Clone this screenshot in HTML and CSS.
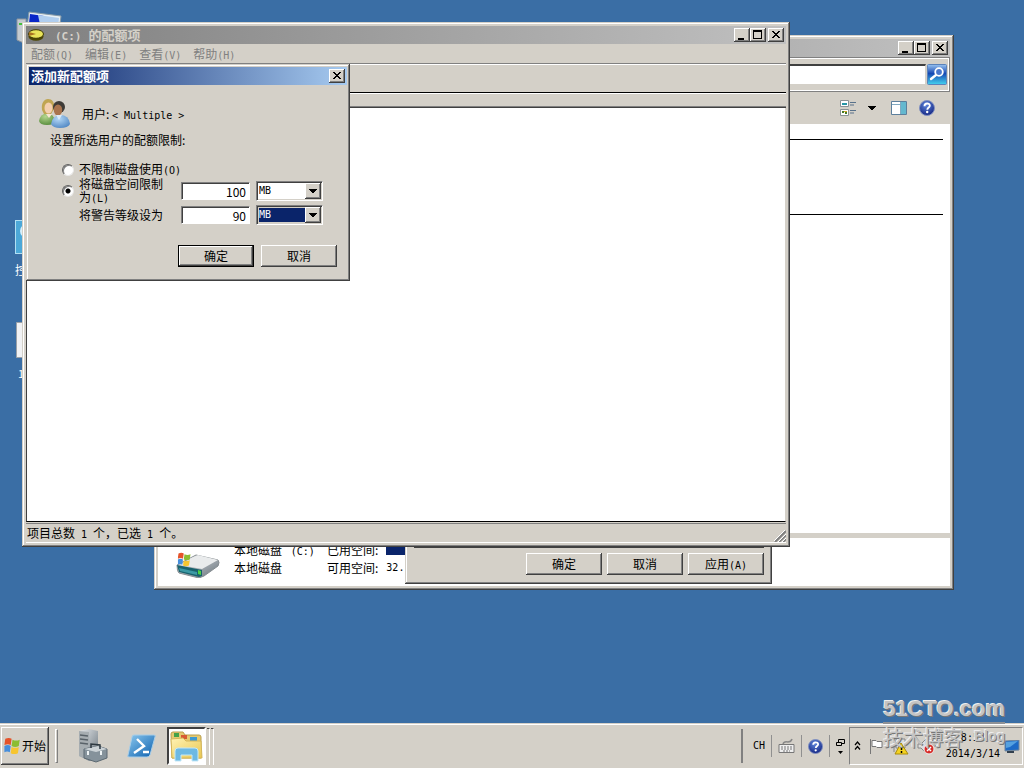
FILE: index.html
```html
<!DOCTYPE html>
<html lang="zh-CN">
<head>
<meta charset="utf-8">
<title>(C:) 的配额项</title>
<link rel="stylesheet" href="styles.css">
</head>
<body>
<svg width="0" height="0" class="defs" aria-hidden="true">
  <defs>
    <linearGradient id="blue" x1="0" y1="0" x2="1" y2="1"><stop offset="0" stop-color="#8cc8ee"/><stop offset="1" stop-color="#0b5fae"/></linearGradient>
    <linearGradient id="cyan" x1="0" y1="0" x2="0" y2="1"><stop offset="0" stop-color="#9ac4f0"/><stop offset=".45" stop-color="#1649b4"/><stop offset="1" stop-color="#45d4ef"/></linearGradient>
    <linearGradient id="steel" x1="0" y1="0" x2="1" y2="1"><stop offset="0" stop-color="#e8ebed"/><stop offset="1" stop-color="#66717a"/></linearGradient>
    <linearGradient id="folder" x1="0" y1="0" x2="1" y2="1"><stop offset="0" stop-color="#fff3b4"/><stop offset="1" stop-color="#e9c64f"/></linearGradient>
    <radialGradient id="navy" cx=".45" cy=".3" r=".75"><stop offset="0" stop-color="#5f87dc"/><stop offset="1" stop-color="#10207e"/></radialGradient>
    <radialGradient id="green" cx=".4" cy=".3" r=".8"><stop offset="0" stop-color="#b5d68e"/><stop offset="1" stop-color="#4f8636"/></radialGradient>
    <radialGradient id="shirt" cx=".4" cy=".3" r=".8"><stop offset="0" stop-color="#b4d8f6"/><stop offset="1" stop-color="#4a82c0"/></radialGradient>
    <symbol id="min" viewBox="0 0 12 10"><path d="M2 8h6v2H2z"/></symbol>
    <symbol id="max" viewBox="0 0 12 10"><path d="M1 0h9v9H1zM2 2v6h7V2z" fill-rule="evenodd"/></symbol>
    <symbol id="close" viewBox="0 0 12 10"><path d="M2 1h2v1h1v1h2V2h1V1h2v1H9v1H8v1H7v1h1v1h1v1h1v1H8V7H7V6H5v1H4v1H2V7h1V6h1V5h1V4H4V3H3V2H2z"/></symbol>
    <symbol id="down" viewBox="0 0 8 4"><path d="M0 0h8v1H7v1H6v1H5v1H3V3H2V2H1V1H0z"/></symbol>
    <symbol id="help" viewBox="0 0 16 16"><circle cx="8" cy="8" r="7.5" fill="url(#navy)" stroke="#8090c0"/><path d="M5.5 6.2c0-3.6 5.3-3.3 5.3-.5 0 1.8-2.5 1.9-2.5 4" fill="none" stroke="#fff" stroke-width="1.9"/><circle cx="8.2" cy="12" r="1.2" fill="#fff"/></symbol>
    <symbol id="flag" viewBox="0 0 18 20"><path d="M1 2Q5 0 8 2L7 9Q4 7 0 9z" fill="#e5532a"/><path d="M9 3q4 2 8 0l-1 7q-4 2-8 0z" fill="#8bbd32"/><path d="M0 10q4-2 7 0l-1 7q-3-2-6 0z" fill="#468edc"/><path d="M8 11q4 2 8 0l-1 7q-4 2-8 0z" fill="#f7c52f"/></symbol>
  </defs>
</svg>

<main class="desktop">
  <div class="shortcut computer">
    <svg width="48" height="36" viewBox="0 0 48 36"><path d="M1 8h9v25l-9-4z" fill="#c5cbd0" stroke="#8d959c"/><path d="M3 12h4v2H3z" fill="#43c13b"/><path d="M13 1l32 4-3 24-32-4z" fill="#e8f0f5" stroke="#889ba8"/><path d="M14 3l14 2-3 18-13-2z" fill="#0826c8"/><path d="M22 4l21 3-2 18-15-2z" fill="#b0ceef"/></svg>
  </div>
  <div class="shortcut control">
    <svg width="36" height="34" viewBox="0 0 36 34"><rect x=".5" y=".5" width="35" height="33" fill="#4ca8d8" stroke="#b1e0f4"/><circle cx="12" cy="11" r="7" fill="#d9f0fa"/></svg>
    <span>控制面板</span>
  </div>
  <div class="shortcut file">
    <svg width="32" height="36" viewBox="0 0 32 36"><path d="M.5.5h31v35H.5z" fill="#f1f2f4" stroke="#9aa0a7"/></svg>
    <span>1</span>
  </div>

  <section class="window explorer" aria-label="计算机">
    <header class="caption idle">
      <div class="controls">
        <button aria-label="最小化"><svg width="12" height="10"><use href="#min"/></svg></button><button aria-label="最大化"><svg width="12" height="10"><use href="#max"/></svg></button><button class="shut" aria-label="关闭"><svg width="12" height="10"><use href="#close"/></svg></button>
      </div>
    </header>
    <form class="address">
      <input type="search" aria-label="搜索">
      <button type="button" class="find" aria-label="搜索"><svg width="20" height="21" viewBox="0 0 20 21"><rect x=".5" y=".5" width="19" height="20" rx="1" fill="url(#cyan)" stroke="#5b83bb"/><path d="M9 11l-5 4" stroke="#fff" stroke-width="2.4" stroke-linecap="round"/><circle cx="12" cy="8" r="3.8" fill="#4a78cc" stroke="#fff" stroke-width="1.8"/></svg></button>
    </form>
    <nav class="tools">
      <button aria-label="视图"><svg width="17" height="16" viewBox="0 0 17 16"><path d="M.5.5h8v6h-8zM.5 9.500h8v6h-8z" fill="#fff" stroke="#8a9294"/><path d="M2 3h5v2H2z" fill="#2696a5"/><path d="M2 11h2v2H2zM5 12h2v2H5z" fill="#477b24"/><path d="M4 11h3v1H4z" fill="#d4a52a"/><path d="M10 2.500h6M10 5h4M10 10.500h6M10 13h4" stroke="#58718b"/></svg></button>
      <button class="drop" aria-label="更多视图"><svg width="8" height="4"><use href="#down"/></svg></button>
      <button class="pane" aria-label="预览窗格"><svg width="16" height="14" viewBox="0 0 16 14"><path d="M.5.5h15v13H.5z" fill="#fff" stroke="#5c7f9c"/><path d="M10 1h5v12h-5z" fill="#64b8cf"/><path d="M1 3.500h9M9.500 1v12" stroke="#81a9c0"/></svg></button>
      <button aria-label="帮助"><svg width="16" height="16"><use href="#help"/></svg></button>
    </nav>
    <div class="files"><hr><hr></div>
    <footer class="details">
      <svg width="44" height="26" viewBox="0 0 44 26"><path d="M1 13L20 3l22 5q2 2 0 6L28 24l-5 2L3 21q-2-1-2-8z" fill="url(#steel)" stroke="#868d91"/><path d="M15 6l7-3 20 5-16 9-22-4z" fill="#e9ebec"/><path d="M1 13l25 5v6l-3 1L3 20z" fill="#19626d"/><path d="M3 16l18 4v3L4 19z" fill="#3c9aa5"/><path d="M22 18l3 1v4l-3-1z" fill="#4cd244"/><svg x="1" y="0" width="15" height="15" viewBox="0 0 18 20"><use href="#flag"/></svg></svg>
      <dl>
        <dt>本地磁盘 <span class="latin"> (C:)</span></dt><dd>已用空间: <i class="meter"></i></dd>
        <dt>本地磁盘</dt><dd>可用空间: <span class="latin">32.</span></dd>
      </dl>
    </footer>
  </section>

  <section class="window properties" aria-label="属性">
    <button class="push">确定</button><button class="push">取消</button><button class="push">应用<span class="latin">(A)</span></button>
  </section>

  <section class="window quota" aria-labelledby="quota-title">
    <header class="caption idle">
      <svg width="16" height="12" viewBox="0 0 16 12"><ellipse cx="8" cy="7.500" rx="7.500" ry="4.300" fill="#4d4705"/><ellipse cx="8" cy="5" rx="7.500" ry="4.300" fill="#e9e45a" stroke="#3e3902"/><path d="M8 5L1 3v4z" fill="#a97322"/></svg>
      <h1 id="quota-title"><span class="latin">(C:)</span> 的配额项</h1>
      <div class="controls">
        <button aria-label="最小化"><svg width="12" height="10"><use href="#min"/></svg></button><button aria-label="最大化"><svg width="12" height="10"><use href="#max"/></svg></button><button class="shut" aria-label="关闭"><svg width="12" height="10"><use href="#close"/></svg></button>
      </div>
    </header>
    <nav class="menu">
      <button>配额<span class="latin">(Q)</span></button><button>编辑<span class="latin">(E)</span></button><button>查看<span class="latin">(V)</span></button><button>帮助<span class="latin">(H)</span></button>
    </nav>
    <div class="toolbar"></div>
    <div class="columns"></div>
    <div class="list"></div>
    <footer class="status">
      <span>项目总数<span class="latin"> 1 </span>个，已选<span class="latin"> 1 </span>个。</span>
      <svg width="12" height="12" viewBox="0 0 12 12"><path d="M1 12L12 1M5 12l7-7M9 12l3-3" stroke="#808080" stroke-width="2"/><path d="M0 11L11 0M4 12l8-8M8 12l4-4" stroke="#fff"/></svg>
    </footer>
  </section>

  <section class="window dialog" role="dialog" aria-labelledby="dialog-title">
    <header class="caption active">
      <h2 id="dialog-title">添加新配额项</h2>
      <div class="controls"><button aria-label="关闭"><svg width="12" height="10"><use href="#close"/></svg></button></div>
    </header>
    <form class="limits">
      <div class="user">
        <svg width="32" height="30" viewBox="0 0 32 30"><path d="M0 22q1-7 8-8 7 1 8 8-1 4-8 4-7 0-8-4z" fill="url(#green)"/><path d="M3 11C2 4 5 0 9 0s7 3 6 10l-3 5H5z" fill="#c0a552"/><ellipse cx="9.500" cy="9" rx="4" ry="5.500" fill="#f3cfb0"/><path d="M7 15l3 4 3-4z" fill="#f8e5d2"/><path d="M12 25q1-8 9-9 9 0 10 9-2 4-10 4-7 0-9-4z" fill="url(#shirt)"/><ellipse cx="20" cy="8" rx="6" ry="6" fill="#3e3b37"/><ellipse cx="19" cy="11" rx="4.200" ry="5.500" fill="#a9744e"/><path d="M17 16l3 5 3-5z" fill="#dceaf7"/></svg>
        <span>用户: <span class="latin">&lt; Multiple &gt;</span></span>
      </div>
      <p>设置所选用户的配额限制:</p>
      <div class="choice"><input type="radio" name="limit" id="unlimited"><label for="unlimited">不限制磁盘使用<span class="latin">(O)</span></label></div>
      <div class="fields">
        <div class="choice"><input type="radio" name="limit" id="limited" checked><label for="limited">将磁盘空间限制为<span class="latin">(L)</span></label></div>
        <input class="amount" type="text" value="100" aria-label="磁盘空间限制">
        <span class="combo"><select aria-label="限制单位"><option>MB</option></select><i><svg width="8" height="4"><use href="#down"/></svg></i></span>
        <label class="warn" for="warning">将警告等级设为</label>
        <input class="amount" type="text" id="warning" value="90">
        <span class="combo chosen"><select aria-label="警告单位"><option>MB</option></select><i><svg width="8" height="4"><use href="#down"/></svg></i></span>
      </div>
      <div class="actions"><button type="button" class="push default">确定</button><button type="button" class="push">取消</button></div>
    </form>
  </section>
</main>

<footer class="taskbar">
  <button class="start"><svg width="17" height="18"><use href="#flag"/></svg>开始</button>
  <i class="grip"></i>
  <nav class="pins">
    <button aria-label="服务器管理器"><svg width="30" height="34" viewBox="0 0 30 34"><path d="M1 2l10-2 9 2v28l-9 2-10-5z" fill="url(#steel)"/><path d="M1 2l10 1v28L1 27z" fill="#a6adb1"/><path d="M2 6l8 1M2 10l8 1M2 14l8 1" stroke="#596269" stroke-width="1.500"/><path d="M6 20l14-3 9 3v9l-11 4-12-4z" fill="#85929b" stroke="#5c6972"/><path d="M6 20l12 3 11-3-9-3z" fill="#cbd2d6"/><path d="M13 19v-4l9 1v4" fill="none" stroke="#2d3941" stroke-width="1.500"/><path d="M10 22v4M23 22v4" stroke="#eef3f5" stroke-width="2"/></svg></button>
    <button aria-label="PowerShell"><svg width="29" height="24" viewBox="0 0 29 24"><path d="M7 1h20q2 0 1 2l-5 18q-1 2-3 2H2q-2 0-1-2L5 3q0-2 2-2z" fill="url(#blue)" stroke="#a9cee8"/><path d="M10 5l7 7-10 7M16 18h6" fill="none" stroke="#fff" stroke-width="2.400"/></svg></button>
    <button class="open" aria-label="Windows 资源管理器"><svg width="33" height="31" viewBox="0 0 33 31"><path d="M1 3q0-2 2-2h10l2 3h14q2 0 2 2v21H2z" fill="#e5ca71" stroke="#b99e4d"/><path d="M4 2h5v4H4z" fill="#43a24a"/><path d="M11 4h6v4h-6z" fill="#d75a34"/><path d="M20 6h7v4h-7z" fill="#3e9ad2"/><path d="M1 8l12-1 3 3h15l1 17H2z" fill="url(#folder)" stroke="#d4b65a"/><path d="M5 30V20q0-3 3-3h17q3 0 3 3v10h-6v-6H11v6z" fill="#6db9e3" stroke="#c5e8f7"/></svg></button>
    <i class="edge"></i><i class="edge"></i>
  </nav>
  <div class="language">
    <span class="latin">CH</span><i></i>
    <svg width="17" height="16" viewBox="0 0 17 16"><path d="M1 6.500h15v8H1z" fill="#eee" stroke="#777"/><path d="M3 9h11M3 11h11M5 13h7" stroke="#777" stroke-dasharray="2 1"/><path d="M5 6q1-3 5-2 3 0 4-3" fill="none" stroke="#888" stroke-width="1.500"/></svg><i></i>
    <svg width="15" height="15"><use href="#help"/></svg><i></i>
    <svg width="9" height="17" viewBox="0 0 9 17"><path d="M2.500 4V1.500h6v4H6M.5 4.500h5v3h-5z" fill="none" stroke="#000"/><path d="M2 13h5l-2.500 3z"/></svg>
  </div>
  <div class="tray">
    <svg width="7" height="10" viewBox="0 0 7 10"><path d="M1 4l2.500-3L6 4M1 8.500l2.500-3 2.500 3" fill="none" stroke="#000" stroke-width="1.200"/></svg>
    <svg width="15" height="17" viewBox="0 0 15 17"><path d="M1.500 1v15M3 2.500h4l1 1h5v6H8l-1-1H3z" fill="#fff" stroke="#777"/></svg>
    <svg width="17" height="18" viewBox="0 0 17 18"><path d="M2 1v14M4 2h9v9H4z" fill="#ddd" stroke="#888"/><path d="M9 6l7 11H3z" fill="#f5d321" stroke="#a88a0b"/><path d="M9.500 9v4M9.500 14v2" stroke="#000" stroke-width="1.500"/></svg>
    <svg width="18" height="18" viewBox="0 0 18 18"><path d="M1 7h3l5-5v14l-5-5H1z" fill="#ddd" stroke="#888"/><circle cx="12" cy="12" r="5" fill="#d72b27" stroke="#eee"/><path d="M10 10l4 4M14 10l-4 4" stroke="#fff" stroke-width="1.500"/></svg>
    <time class="clock latin" datetime="2014-03-14T08:54"><span>8:54</span><span>2014/3/14</span></time>
    <svg width="16" height="13" viewBox="0 0 16 13"><path d="M1 1l14-1v10l-14 1z" fill="#1d6ac6" stroke="#70869c"/><path d="M2 2l12-1-8 6-4 1z" fill="#55a1e0"/><path d="M3 11h7v2H3z" fill="#33414f"/></svg>
  </div>
</footer>
<div class="watermark"><b>51CTO.com</b><div><span>技术博客</span><em>Blog</em></div></div>
</body>
</html>
```
FILE: styles.css
```css
* { box-sizing: border-box; }
body {
  margin: 0;
  height: 100vh;
  display: flex;
  flex-direction: column;
  overflow: hidden;
  position: relative;
  background: #3a6ea5;
  color: #000;
  font: 12px/14px "Noto Sans CJK SC", sans-serif;
}
button, input, select { font: inherit; color: inherit; margin: 0; padding: 0; border: 0; border-radius: 0; background: none; }
h1, h2, p, dl, dd { margin: 0; font-size: 12px; }
svg { display: block; flex: none; }
.defs { position: absolute; }
.latin { font-family: "DejaVu Sans Mono", monospace; font-size: 10px; line-height: 12px; white-space: pre; }

.desktop { flex: 1; position: relative; min-height: 0; }
.shortcut { position: absolute; color: #fff; white-space: nowrap; }
.shortcut span { display: block; }
.computer { left: 16px; top: 11px; }
.control { left: 15px; top: 220px; }
.control span { margin-top: 9px; }
.file { left: 16px; top: 322px; }
.file span { margin: 8px 0 0 2px; font-size: 11px; }

.window {
  position: absolute;
  display: flex;
  flex-direction: column;
  padding: 4px;
  background: #d4d0c8;
  box-shadow: inset -1px -1px #404040, inset 1px 1px #d4d0c8, inset -2px -2px #808080, inset 2px 2px #fff;
}
.caption { display: flex; align-items: center; height: 18px; flex: none; padding: 0 2px; }
.caption h1, .caption h2 { font-size: 13px; font-weight: 700; white-space: nowrap; }
.idle { background: linear-gradient(90deg, #808080, #c0c0c0); color: #d4d0c8; }
.active { background: linear-gradient(90deg, #0a246a, #a6caf0); color: #fff; }
.caption h1 { margin-left: 11px; }
.caption h1 .latin { font-size: 11px; margin-right: 4px; }
.controls { margin-left: auto; display: flex; }
.controls button {
  width: 16px;
  height: 14px;
  display: grid;
  place-items: center;
  color: #000;
  background: #d4d0c8;
  box-shadow: inset -1px -1px #404040, inset 1px 1px #fff, inset -2px -2px #808080;
}
.controls .shut { margin-left: 2px; }

.push {
  width: 76px;
  height: 22px;
  flex: none;
  background: #d4d0c8;
  box-shadow: inset -1px -1px #404040, inset 1px 1px #fff, inset -2px -2px #808080;
}
.default { border: 1px solid #000; }

.explorer { left: 154px; top: 35px; width: 800px; height: 555px; }
.address {
  display: flex;
  align-items: center;
  height: 35px;
  padding: 0 2px 0 8px;
  border: 1px solid #808080;
  box-shadow: inset -1px -1px #fff, inset 0 1px #fff;
}
.address input { flex: 1; height: 21px; margin-right: 1px; background: #fff; border: 1px solid #d4d0c8; border-top: 2px solid #404040; }
.tools { display: flex; justify-content: flex-end; align-items: center; height: 32px; padding-right: 15px; }
.drop { margin: 0 15px 0 11px; }
.pane { margin-right: 12px; }
.files { flex: 1; background: #fff; padding: 15px 7px 0 0; }
.files hr { margin: 0 0 74px; border: 0; height: 1px; background: #000; }
.details { display: flex; align-items: flex-start; height: 53px; border-top: 5px solid #d4d0c8; background: #fff; padding: 5px 0 0 18px; }
.details svg { margin-top: 9px; }
.details dl { display: grid; grid-template-columns: 93px auto; grid-auto-rows: 14px; row-gap: 4px; margin-left: 14px; }
.details dd { display: flex; gap: 8px; align-items: center; }
.meter { width: 120px; height: 9px; background: #0a246a; }

.properties { left: 405px; top: 320px; width: 367px; height: 264px; flex-direction: row; align-items: flex-end; justify-content: flex-end; gap: 5px; padding: 0 8px 9px; }
.properties::before { content: ""; position: absolute; left: 9px; right: 8px; bottom: 36px; height: 1px; background: #404040; }

.quota { left: 22px; top: 22px; width: 768px; height: 525px; }
.menu { display: flex; gap: 12px; height: 21px; padding-left: 5px; align-items: center; color: #808080; border-bottom: 1px solid #fff; box-shadow: inset 0 -1px #808080; }
.toolbar { height: 28px; border-bottom: 1px solid #000; }
.columns { height: 15px; border-bottom: 1px solid #404040; box-shadow: inset 0 1px #fff, inset 0 -1px #808080; }
.list { flex: 1; background: #fff; border: solid #d4d0c8; border-width: 0 1px 0 0; border-left: 1px solid #404040; border-bottom: 1px solid #000; }
.status { display: flex; align-items: center; justify-content: space-between; height: 20px; margin-top: 1px; padding: 1px 0 0 1px; border-top: 1px solid #808080; border-bottom: 1px solid #fff; }
.status svg { align-self: flex-end; }

.dialog { left: 26px; top: 64px; width: 324px; height: 217px; padding: 3px; }
.limits { padding: 14px 10px 0; }
.user { display: flex; align-items: center; gap: 11px; }
.limits p { margin: 4px 0 15px 11px; }
.choice { display: flex; align-items: center; gap: 5px; margin-left: 23px; }
.choice label { line-height: 13px; }
.choice input { appearance: none; flex: none; width: 12px; height: 12px; border-radius: 50%; background: #fff; border: 1px solid; border-color: #606060 #e8e8e8 #e8e8e8 #606060; box-shadow: inset 1px 1px #808080; }
.choice input:checked { background: radial-gradient(circle, #000 0 2px, #fff 3px); }
.fields { display: grid; grid-template-columns: 136px 69px 67px; column-gap: 6px; align-items: center; }
.fields .choice { margin-right: 10px; }
.warn { margin-left: 40px; }
.amount { width: 100%; height: 18px; text-align: right; padding-right: 3px; background: #fff; border: 1px solid; border-color: #808080 #fff #fff #808080; box-shadow: inset 1px 1px #404040; }
.combo { position: relative; display: block; }
.combo select { appearance: none; width: 100%; height: 20px; display: block; padding: 2px; font: 10px/14px "DejaVu Sans Mono", monospace; background: #fff; border: 1px solid; border-color: #808080 #fff #fff #808080; box-shadow: inset 1px 1px #404040, inset -1px -1px #d4d0c8; }
.chosen select { color: #fff; background: linear-gradient(#0a246a, #0a246a) content-box #fff; }
.combo i { position: absolute; right: 2px; top: 2px; width: 16px; height: 16px; display: grid; place-items: center; pointer-events: none; background: #d4d0c8; box-shadow: inset -1px -1px #404040, inset 1px 1px #fff, inset -2px -2px #808080; }
.actions { display: flex; justify-content: flex-end; gap: 7px; margin-top: 20px; }

.taskbar { display: flex; align-items: center; height: 45px; background: #d4d0c8; border-top: 1px solid #d4d0c8; box-shadow: inset 0 1px #fff; padding: 0 1px; }
.start { display: flex; align-items: center; gap: 1px; width: 48px; height: 38px; padding-left: 3px; white-space: nowrap; box-shadow: inset -1px -1px #404040, inset 1px 1px #fff, inset -2px -2px #808080; }
.grip { width: 3px; height: 34px; margin-left: 6px; border: 1px solid; border-color: #fff #808080 #808080 #fff; }
.pins { display: flex; align-items: center; height: 38px; }
.pins button:first-child { margin-left: 20px; }
.pins button + button { margin-left: 19px; }
.pins .open { width: 39px; height: 38px; margin-left: 11px; display: grid; place-items: center; background: #fff; border: 2px solid; border-color: #404040 #fff #fff #404040; }
.edge { width: 3px; height: 37px; margin-left: 1px; border-top: 1px solid #404040; border-right: 1px solid #fff; }
.language { display: flex; align-items: center; gap: 6px; height: 34px; margin-left: auto; padding-left: 10px; margin-right: 4px; border-left: 2px solid #808080; }
.language i { height: 22px; width: 1px; background: #909090; }
.tray { display: flex; align-items: center; width: 174px; height: 38px; padding: 0 2px 0 4px; gap: 8px; border: 1px solid; border-color: #808080 #fff #fff #808080; }
.clock { display: flex; flex-direction: column; align-items: center; gap: 4px; margin-left: auto; }
.tray .clock + svg { margin-left: -4px; }

.watermark { position: absolute; right: 19px; bottom: 16px; color: #c4c4c4; text-shadow: 1px 1px #777, -1px -1px #eee; pointer-events: none; }
.watermark b { display: block; font: 700 22px/27px "Liberation Sans", sans-serif; border-bottom: 2px solid #8f9296; }
.watermark div { display: flex; justify-content: space-between; font-size: 20px; line-height: 28px; }
.watermark em { font: 700 14px/24px "Liberation Sans", sans-serif; }
```
